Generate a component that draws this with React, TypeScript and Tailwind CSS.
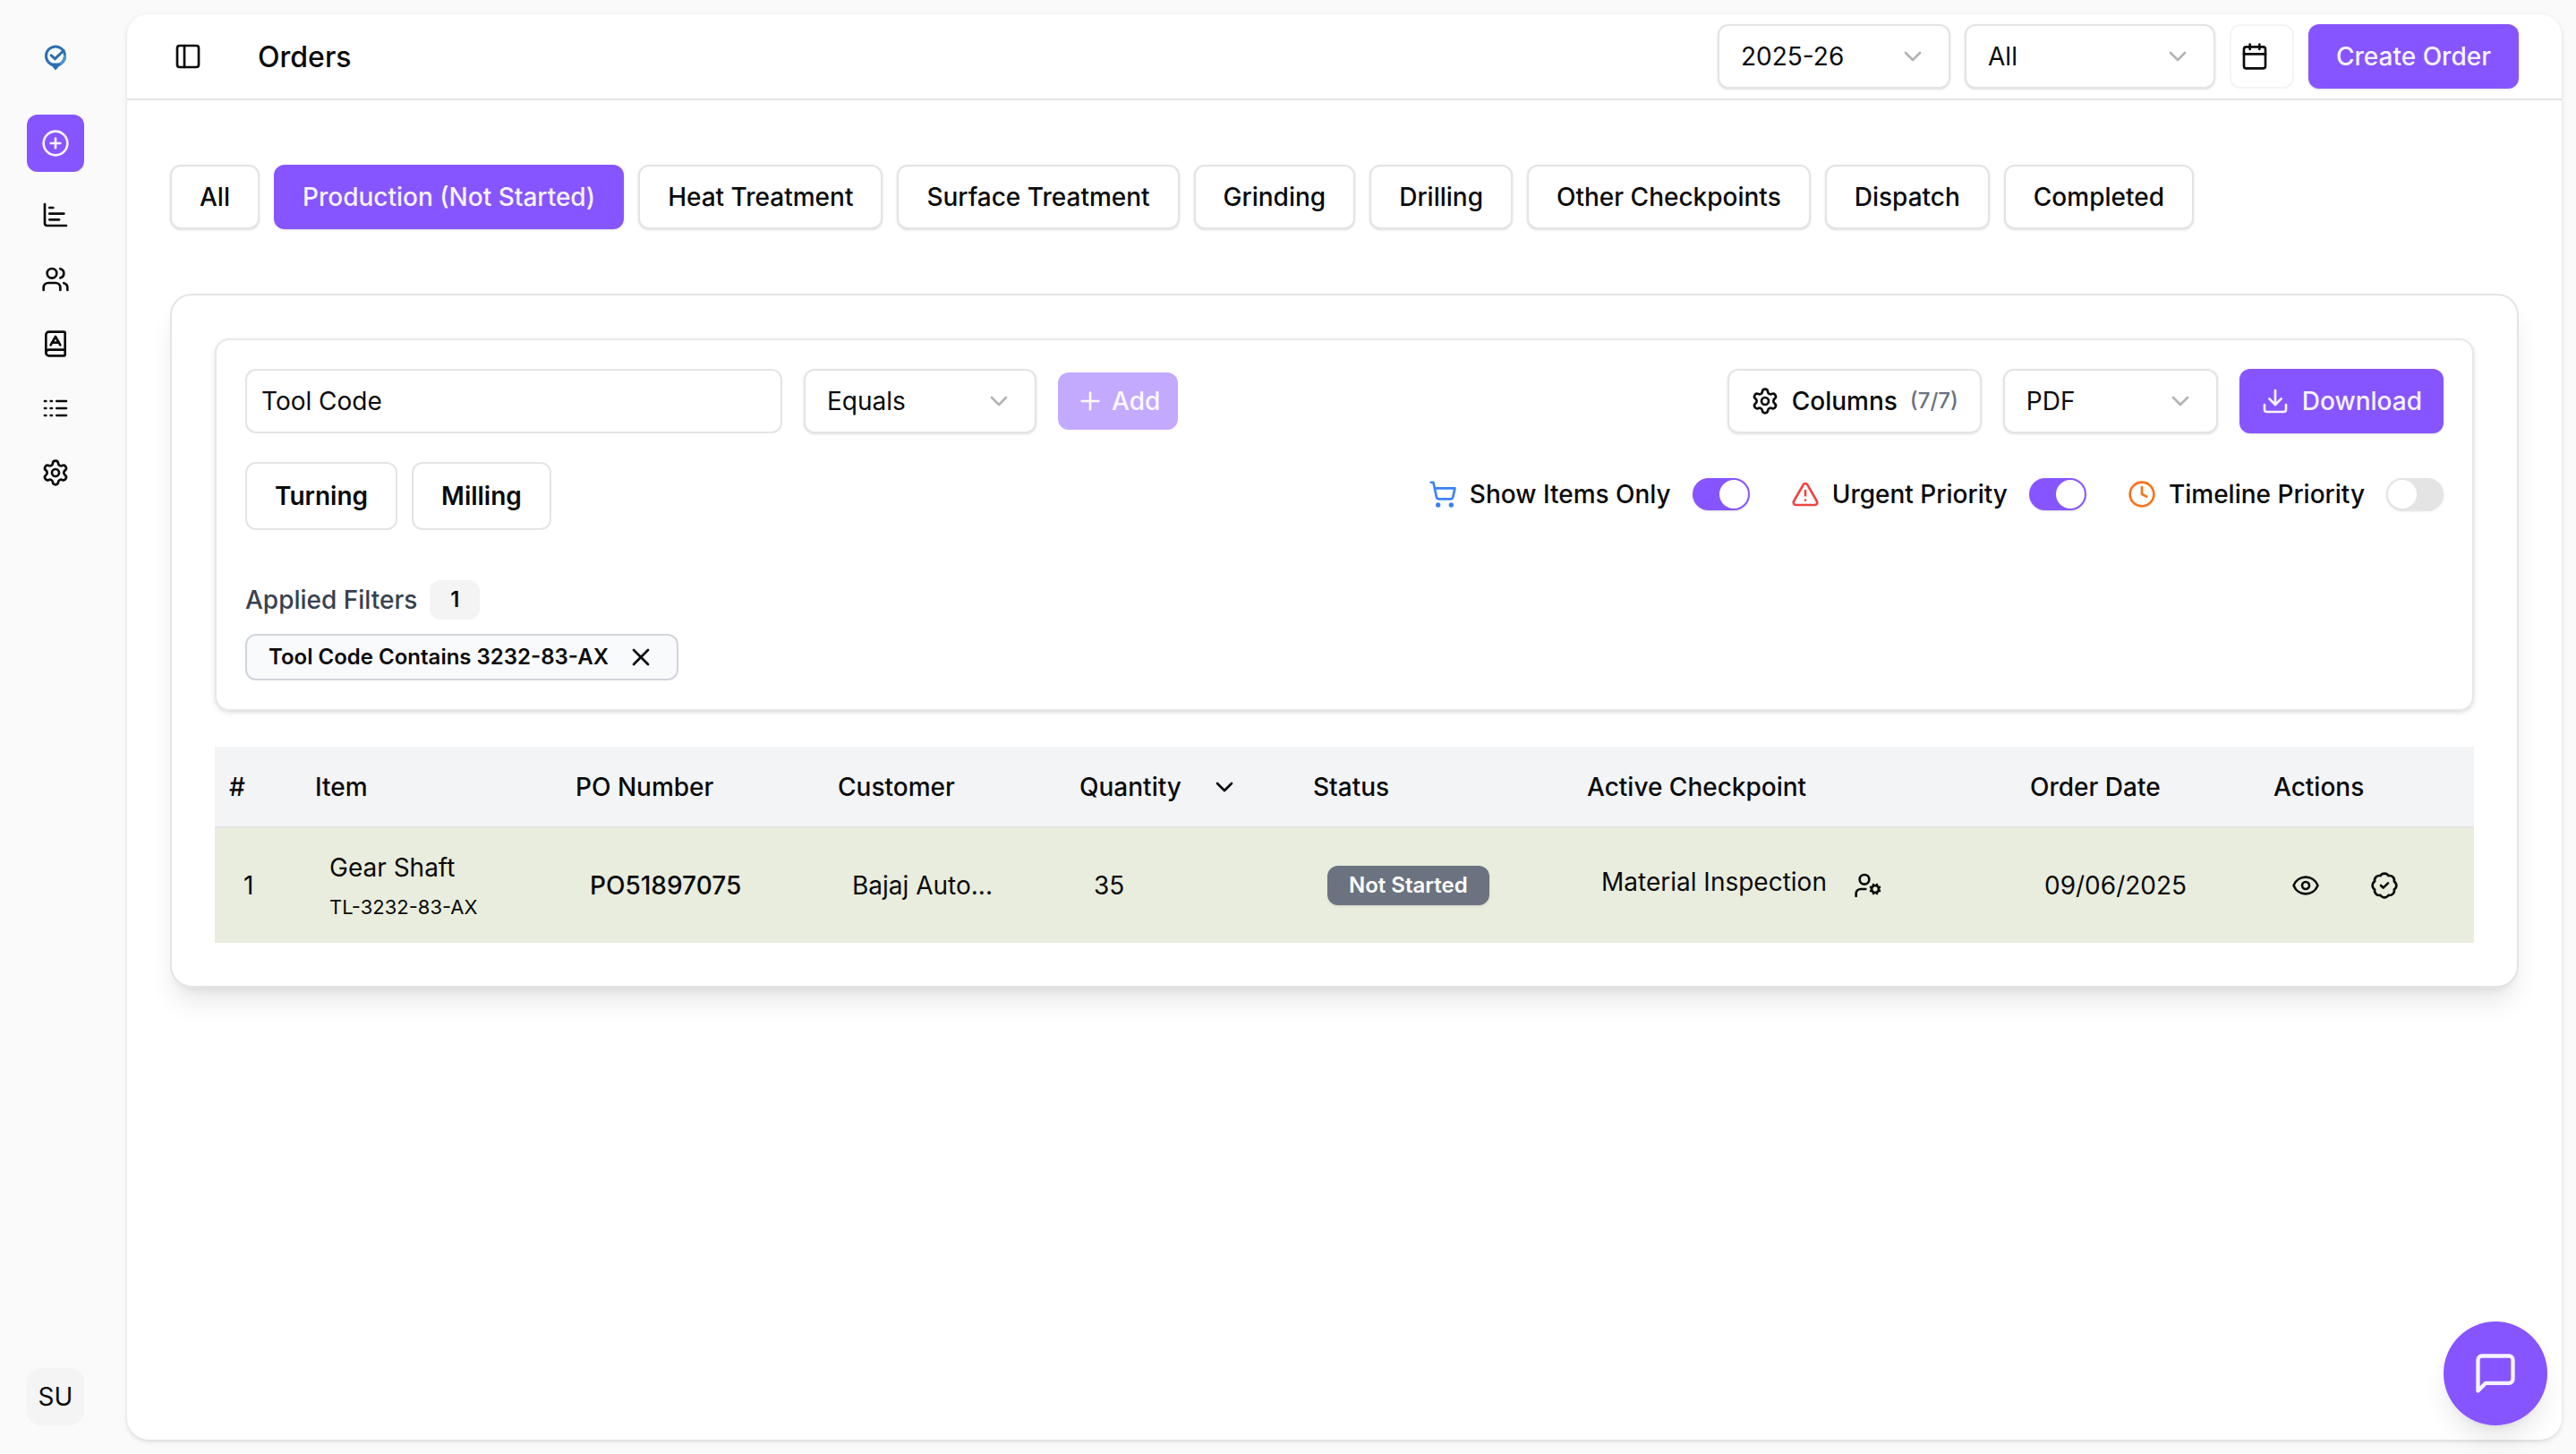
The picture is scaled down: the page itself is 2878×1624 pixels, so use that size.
import React, { useState } from "react";
import type { ReactNode } from "react";
import {
  BadgeCheck,
  BookA,
  Calendar,
  ChartBar,
  ChevronDown,
  CirclePlus,
  Clock,
  Download,
  Eye,
  PanelLeft,
  Plus,
  Settings,
  ShoppingCart,
  TriangleAlert,
  UserCog,
  Users,
  X,
} from "lucide-react";

function Logo() {
  return (
    <svg viewBox="0 0 24 28" className="h-[30px] w-[26px]" fill="none" aria-hidden="true">
      <path d="M4 18 L12 27.5 L20 18 L16 20 H8 Z" fill="#2d6fb0" />
      <path d="M12 27.5 L21.5 17 L17 20 Z" fill="#4c97d0" />
      <circle cx="12" cy="12.5" r="9.8" stroke="#2d6fb0" strokeWidth="2.8" />
      <path d="M21.8 11.5a9.8 9.8 0 0 1-5 9.6" stroke="#4c97d0" strokeWidth="2.8" />
      <path d="M7.5 12 L11.5 15.5 L20.5 7" stroke="#2d6fb0" strokeWidth="2.8" strokeLinecap="round" />
    </svg>
  );
}

function ListIcon() {
  return (
    <svg viewBox="0 0 24 24" className="size-8" fill="none" stroke="currentColor" strokeWidth="2" strokeLinecap="round" aria-hidden="true">
      <path d="M13 12h8M13 18h8M13 6h8M3 12h1M3 18h1M3 6h1M8 12h1M8 18h1M8 6h1" />
    </svg>
  );
}

function ChatIcon() {
  return (
    <svg viewBox="0 0 24 24" className="size-[52px]" fill="none" stroke="currentColor" strokeWidth="2" strokeLinecap="round" strokeLinejoin="round" aria-hidden="true">
      <path d="M21 15a2 2 0 0 1-2 2H7l-4 4V5a2 2 0 0 1 2-2h14a2 2 0 0 1 2 2z" />
    </svg>
  );
}

const navItems = [
  { label: "Reports", icon: <ChartBar className="size-8" /> },
  { label: "Users", icon: <Users className="size-8" /> },
  { label: "Catalog", icon: <BookA className="size-8" /> },
  { label: "Checkpoints", icon: <ListIcon /> },
  { label: "Settings", icon: <Settings className="size-8" /> },
];

const tabs = [
  "All",
  "Production (Not Started)",
  "Heat Treatment",
  "Surface Treatment",
  "Grinding",
  "Drilling",
  "Other Checkpoints",
  "Dispatch",
  "Completed",
];

function Picker({ label, options, className }: { label: string; options: string[]; className: string }) {
  return (
    <div className={`relative ${className}`}>
      <select
        aria-label={label}
        className="h-[72px] w-full appearance-none rounded-xl border-2 border-[#e4e4e5] bg-white px-6 shadow-sm"
      >
        {options.map((o) => (
          <option key={o}>{o}</option>
        ))}
      </select>
      <ChevronDown className="pointer-events-none absolute inset-y-0 right-[26px] my-auto size-8 text-[#b4b4b6]" />
    </div>
  );
}

function Toggle({ id, label, icon, initial }: { id: string; label: string; icon: ReactNode; initial: boolean }) {
  const [on, setOn] = useState(initial);
  return (
    <div className="flex items-center gap-6">
      <label htmlFor={id} className="flex items-center gap-[14px] font-medium">
        {icon}
        {label}
      </label>
      <input
        id={id}
        type="checkbox"
        role="switch"
        checked={on}
        onChange={(e) => setOn(e.target.checked)}
        className="h-9 w-16 appearance-none rounded-full border-2 border-transparent bg-[#e4e4e5] shadow-sm before:block before:size-8 before:rounded-full before:bg-white checked:bg-[#8755ff] checked:before:ml-7"
      />
    </div>
  );
}

const headCell = "px-4 text-left font-medium";
const bodyCell = "px-8 text-left";

export default function App() {
  const [tab, setTab] = useState("Production (Not Started)");
  return (
    <div className="flex min-h-screen bg-[#fafafa] font-['Inter',sans-serif] text-[28px] leading-10 text-[#0a0a0b]">
      <aside className="flex w-[142px] shrink-0 flex-col py-8 pl-[30px]">
        <a href="#" aria-label="Home" className="flex size-16 items-center justify-center">
          <Logo />
        </a>
        <nav className="mt-8 flex flex-col gap-2">
          <button aria-label="New order" className="mb-2 flex size-16 items-center justify-center rounded-xl bg-[#8755ff] text-[#f6f3ff]">
            <CirclePlus className="size-8" />
          </button>
          {navItems.map((n) => (
            <a key={n.label} href="#" aria-label={n.label} className="flex size-16 items-center justify-center">
              {n.icon}
            </a>
          ))}
        </nav>
        <button className="mt-auto size-16 rounded-2xl bg-[#f4f4f4]">SU</button>
      </aside>

      <main className="my-4 mr-4 min-w-0 flex-1 rounded-3xl bg-white shadow-[0_2px_6px_rgba(0,0,0,0.1),0_2px_4px_-2px_rgba(0,0,0,0.1)]">
        <header className="flex h-24 items-center border-b-2 border-[#e4e4e5] px-12">
          <button aria-label="Toggle sidebar" className="flex size-10 items-center justify-center">
            <PanelLeft className="size-8" />
          </button>
          <h1 className="ml-[58px] pt-0.5 text-[32px] font-medium">Orders</h1>
          <div className="ml-auto flex gap-4">
            <Picker label="Financial year" options={["2025-26"]} className="w-[260px]" />
            <Picker label="Order type" options={["All"]} className="w-[280px]" />
            <button aria-label="Pick dates" className="flex size-[72px] items-center rounded-xl border-2 border-[#f4f4f4] pl-[10px]">
              <Calendar className="size-8" />
            </button>
            <button className="h-[72px] rounded-xl bg-[#8755ff] px-[31px] font-medium text-[#f6f3ff] shadow-sm">Create Order</button>
          </div>
        </header>

        <div className="px-12 pt-[72px]">
          <div className="flex flex-wrap gap-4">
            {tabs.map((t) => (
              <button
                key={t}
                onClick={() => setTab(t)}
                className={
                  t === tab
                    ? "h-[72px] rounded-xl bg-[#8755ff] px-8 font-medium text-[#f6f3ff] shadow-sm"
                    : "h-[72px] rounded-xl border-2 border-[#e4e4e5] bg-white px-[31px] font-medium shadow-sm"
                }
              >
                {t}
              </button>
            ))}
          </div>

          <section className="mt-[72px] rounded-3xl border-2 border-[#e4e4e5] bg-white p-12 shadow-[0_20px_30px_-6px_rgba(0,0,0,0.1),0_8px_12px_-8px_rgba(0,0,0,0.1)]">
            <div className="rounded-2xl border-2 border-[#e5e7eb] p-8 shadow-[0_2px_6px_rgba(0,0,0,0.1),0_2px_4px_-2px_rgba(0,0,0,0.1)]">
              <div className="flex items-center gap-6">
                <input
                  aria-label="Filter field"
                  defaultValue="Tool Code"
                  className="h-[72px] w-[600px] rounded-xl border-2 border-[#e4e4e5] px-4"
                />
                <Picker label="Filter condition" options={["Equals"]} className="w-[260px]" />
                <button className="flex h-16 items-center gap-2 rounded-xl bg-[#c3aaff] px-5 font-medium text-[#fbf9ff]">
                  <Plus className="size-8" />
                  Add
                </button>
                <div className="ml-auto flex gap-6">
                  <button className="flex h-[72px] items-center gap-[14px] rounded-xl border-2 border-[#e4e4e5] px-6 font-medium shadow-sm">
                    <Settings className="size-8" />
                    Columns
                    <span className="text-2xl text-[#6b7280]">(7/7)</span>
                  </button>
                  <Picker label="File format" options={["PDF"]} className="w-60" />
                  <button className="flex h-[72px] items-center gap-[14px] rounded-xl bg-[#8755ff] px-6 font-medium text-[#f6f3ff] shadow-sm">
                    <Download className="size-8" />
                    Download
                  </button>
                </div>
              </div>

              <div className="mt-8 flex items-start gap-4">
                <button className="h-[76px] rounded-xl border-2 border-[#e4e4e5] px-[31px] font-semibold">Turning</button>
                <button className="h-[76px] rounded-xl border-2 border-[#e4e4e5] px-[31px] font-semibold">Milling</button>
                <div className="ml-auto flex h-[72px] items-center gap-[46px]">
                  <Toggle id="items-only" label="Show Items Only" initial icon={<ShoppingCart className="size-8 text-[#3b82f6]" />} />
                  <Toggle id="urgent" label="Urgent Priority" initial icon={<TriangleAlert className="size-8 text-[#ef4444]" />} />
                  <Toggle id="timeline" label="Timeline Priority" initial={false} icon={<Clock className="size-8 text-[#f97316]" />} />
                </div>
              </div>

              <div className="mt-14 flex items-center gap-[14px]">
                <span className="font-medium text-[#374151]">Applied Filters</span>
                <span className="flex h-11 w-14 items-center justify-center rounded-xl bg-[#f4f4f4] text-2xl font-semibold">1</span>
              </div>
              <div className="mt-4 flex">
                <span className="flex h-[52px] items-center gap-5 rounded-xl border-2 border-[#d1d5db] bg-[#f9fafb] px-6 text-2xl font-semibold">
                  Tool Code Contains 3232-83-AX
                  <button aria-label="Remove filter">
                    <X className="size-8" />
                  </button>
                </span>
              </div>
            </div>

            <table className="mt-10 w-full table-fixed">
              <colgroup>
                <col className="w-[96px]" />
                <col className="w-[291px]" />
                <col className="w-[293px]" />
                <col className="w-[270px]" />
                <col className="w-[261px]" />
                <col className="w-[306px]" />
                <col className="w-[495px]" />
                <col className="w-[272px]" />
                <col className="w-[240px]" />
              </colgroup>
              <thead>
                <tr className="h-[90px] border-b-2 border-[#e4e4e5] bg-[#f3f4f6]">
                  <th className={headCell}>#</th>
                  <th className={headCell}>Item</th>
                  <th className={headCell}>PO Number</th>
                  <th className={headCell}>Customer</th>
                  <th className={headCell}>
                    <button className="flex items-center gap-8">
                      Quantity
                      <ChevronDown className="size-8" />
                    </button>
                  </th>
                  <th className={headCell}>Status</th>
                  <th className={headCell}>Active Checkpoint</th>
                  <th className={headCell}>Order Date</th>
                  <th className={headCell}>Actions</th>
                </tr>
              </thead>
              <tbody>
                <tr className="h-[129px] bg-[#e9eddd]">
                  <td className={bodyCell}>1</td>
                  <td className={bodyCell}>
                    <div>Gear Shaft</div>
                    <div className="mt-2 text-[22px] leading-8">TL-3232-83-AX</div>
                  </td>
                  <td className="px-8 font-medium">PO51897075</td>
                  <td className={bodyCell}>Bajaj Auto...</td>
                  <td className={bodyCell}>35</td>
                  <td className={bodyCell}>
                    <span className="flex h-11 w-fit items-center rounded-xl bg-[#6b7280] px-6 text-2xl font-semibold text-white shadow">
                      Not Started
                    </span>
                  </td>
                  <td className={bodyCell}>
                    <div className="flex items-end gap-[30px]">
                      <span className="pb-2">Material Inspection</span>
                      <button aria-label="Assign operator" className="pb-2">
                        <UserCog className="size-8" />
                      </button>
                    </div>
                  </td>
                  <td className={bodyCell}>09/06/2025</td>
                  <td className={bodyCell}>
                    <div className="flex gap-14 pl-1">
                      <button aria-label="View order">
                        <Eye className="size-8" />
                      </button>
                      <button aria-label="Approve order">
                        <BadgeCheck className="size-8" />
                      </button>
                    </div>
                  </td>
                </tr>
              </tbody>
            </table>
          </section>
        </div>
      </main>

      <button
        aria-label="Open chat"
        className="fixed right-8 bottom-8 flex size-[116px] items-center justify-center rounded-full bg-[#8755ff] text-[#f6f3ff] shadow-[0_20px_30px_-6px_rgba(0,0,0,0.1),0_8px_12px_-8px_rgba(0,0,0,0.1)]"
      >
        <ChatIcon />
      </button>
    </div>
  );
}
